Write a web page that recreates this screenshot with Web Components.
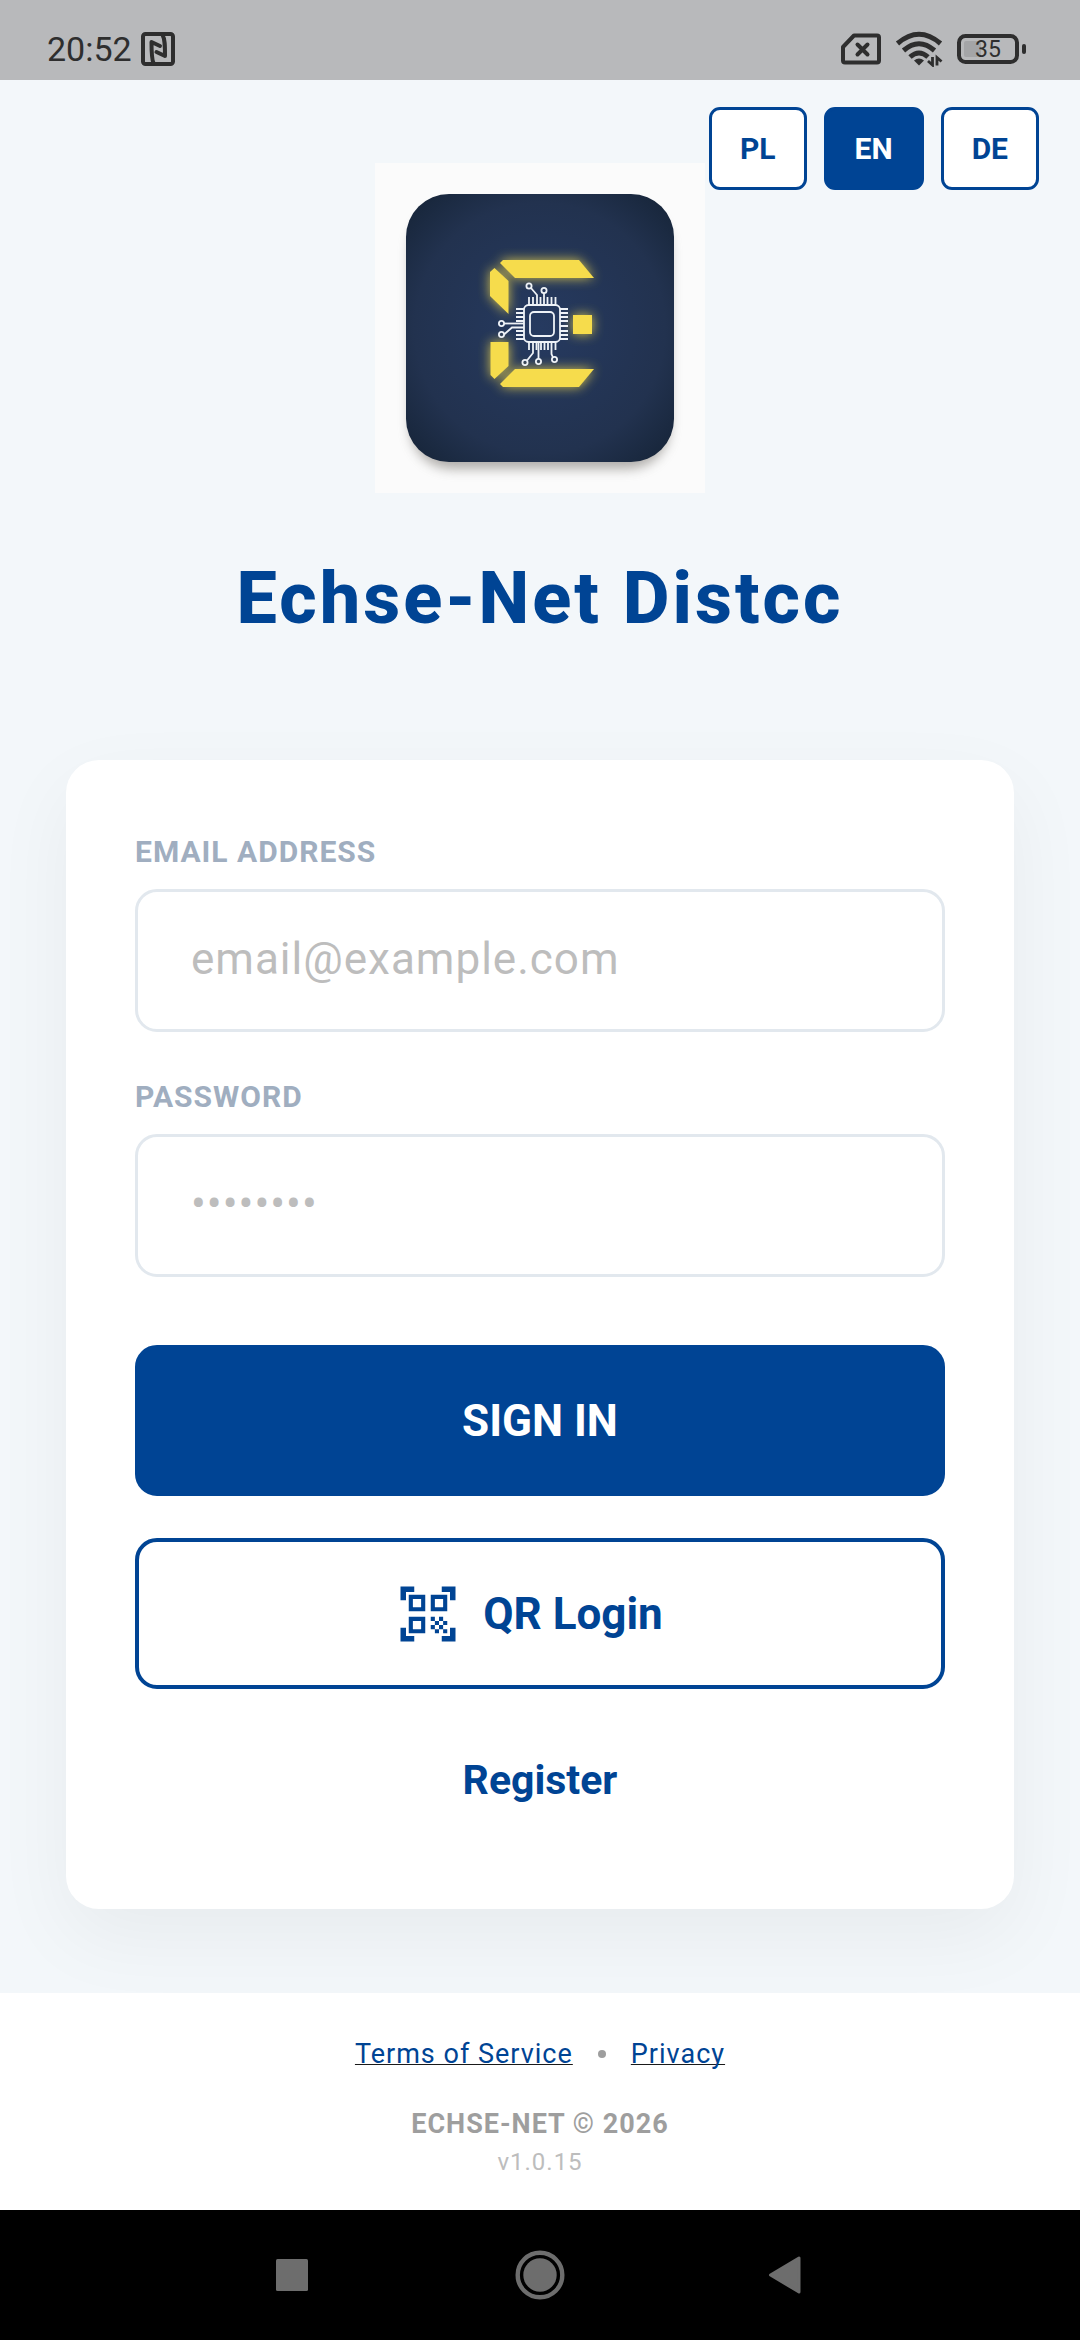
<!DOCTYPE html>
<html lang="en">
<head>
<meta charset="utf-8">
<meta name="viewport" content="width=device-width, initial-scale=1">
<title>Echse-Net Distcc</title>
<style>
  html, body { margin: 0; }
  body { font-family: Roboto, sans-serif; background: #f3f7fa; --brand: #004494; }
</style>
</head>
<body>
<login-screen></login-screen>
<script>
const define = (name, html, setup) => customElements.define(name, class extends HTMLElement {
  connectedCallback() {
    if (this.shadowRoot) return;
    const t = document.createElement('template');
    t.innerHTML = '<style>*{box-sizing:border-box}</style>' + html;
    this.attachShadow({ mode: 'open' }).append(t.content.cloneNode(true));
    if (setup) setup(this, this.shadowRoot);
  }
});

define('status-bar', `
<style>
  :host { display: flex; align-items: center; justify-content: space-between; height: 80px; padding: 18px 54px 0 47px; background: #b8b9bb; color: #2e2e2e; }
  div { display: flex; align-items: center; }
  .left { gap: 9px; }
  .right { gap: 14px; }
  time { font-size: 34px; line-height: 40px; }
  svg { display: block; }
</style>
<div class="left">
  <time>20:52</time>
  <svg width="34" height="34" viewBox="0 0 34 34" fill="none" stroke="#2e2e2e">
    <rect x="2" y="2" width="30" height="30" rx="2.5" stroke-width="4"/>
    <path d="M12.5 31C10.500 27 10.500 21 10.500 10L19 14" stroke-width="4" stroke-linejoin="round" stroke-linecap="round"/>
    <path d="M21.500 3C24 7 24 13 24 24L15.500 20" stroke-width="4" stroke-linejoin="round" stroke-linecap="round"/>
  </svg>
</div>
<div class="right">
  <svg width="40" height="32" viewBox="0 0 40 32" fill="none" stroke="#2e2e2e">
    <path d="M13 2.500H36Q38 2.500 38 4.500V27.500Q38 29.500 36 29.500H4Q2 29.500 2 27.500V14Z" stroke-width="4" stroke-linejoin="round"/>
    <path d="M16.500 11.500L26.500 21.500M26.500 11.500L16.500 21.500" stroke-width="4" stroke-linecap="round"/>
  </svg>
  <svg width="48" height="36" viewBox="0 0 48 36" fill="none" stroke="#2e2e2e" stroke-width="5">
    <path d="M2.500 12.500Q24 -6 45.500 12.500"/>
    <path d="M8.500 19.500Q24 6 39.500 19.500"/>
    <path d="M15 26Q24 18 33 26"/>
    <path d="M24 34.500L19 29.500Q24 25.500 29 29.500Z" fill="#2e2e2e" stroke="none"/>
    <path d="M37.500 26V34L33 30M42 34.500V26.500L46.500 30.500" stroke-width="2.800"/>
  </svg>
  <svg width="69" height="32" viewBox="0 0 69 32">
    <rect x="2" y="3" width="58" height="26" rx="6.500" fill="none" stroke="#2e2e2e" stroke-width="4"/>
    <rect x="7" y="8" width="17" height="16" rx="2" fill="#a4a5a7"/>
    <rect x="65" y="11" width="4" height="10" rx="2" fill="#2e2e2e"/>
    <text x="31" y="24" text-anchor="middle" font-family="Roboto" font-size="23" fill="#2e2e2e">35</text>
  </svg>
</div>`);

define('language-switch', `
<style>
  :host { display: flex; gap: 17px; }
  button { height: 83px; padding: 0 28px; border: 3px solid var(--brand); border-radius: 11px; background: #fff; color: var(--brand); font: 700 30px/36px Roboto, sans-serif; }
  button[aria-pressed=true] { background: var(--brand); color: #fff; }
</style>
<button type="button" aria-pressed="false">PL</button>
<button type="button" aria-pressed="true">EN</button>
<button type="button" aria-pressed="false">DE</button>`);

define('app-logo', `
<style>:host { display: block; width: 330px; } svg { display: block; width: 100%; }</style>
<svg viewBox="0 0 330 330" role="img" aria-label="Echse-Net">
  <defs>
    <radialGradient id="bg" cx=".5" cy=".5" r=".72"><stop offset="0" stop-color="#263a60"/><stop offset=".65" stop-color="#22324f"/><stop offset="1" stop-color="#142234"/></radialGradient>
    <filter id="glow" x="-30%" y="-30%" width="160%" height="160%"><feGaussianBlur stdDeviation="6"/></filter>
    <filter id="drop" x="-10%" y="-10%" width="120%" height="125%"><feGaussianBlur stdDeviation="6"/></filter>
    <g id="e">
      <path d="M128 97H204L219 115H140L125 100Z"/>
      <path d="M119.500 105L133.500 118V151L115 133V109Z"/>
      <path d="M198 152H217V171H198Z"/>
      <path d="M115.500 179H133.500V203L119.500 216L115.500 212Z"/>
      <path d="M140 206H219L204 224H128L125 221Z"/>
    </g>
  </defs>
  <rect width="330" height="330" fill="#fbfbfb"/>
  <rect x="35" y="44" width="260" height="262" rx="42" fill="#7d7975" opacity=".6" filter="url(#drop)"/>
  <rect x="31" y="31" width="268" height="268" rx="43" fill="url(#bg)"/>
  <use href="#e" fill="#f6dc4c" opacity=".85" filter="url(#glow)"/>
  <use href="#e" fill="#f6dc4c"/>
  <g fill="none" stroke="#eef2f7" stroke-width="1.800">
    <rect x="149" y="142" width="36" height="37" rx="4.500"/>
    <rect x="155" y="149" width="24" height="24" rx="4"/>
    <path d="M141 146H149M141 150H149M141 154H149M141 158H149M141 168H149M141 172H149M141 176H149"/>
    <path d="M185 146H193M185 150H193M185 154H193M185 158H193M185 163H193M185 168H193M185 172H193M185 176H193"/>
    <path d="M154 134V142M158 134V142M165.500 134V142M172.500 134V142M176.500 134V142M180.500 134V142"/>
    <path d="M154 179V187M161.500 179V187M166 179V187M169.500 179V187M173 179V187M180.500 179V187"/>
    <circle cx="154" cy="123" r="2.600"/><path d="M156 125L162 132V142"/>
    <circle cx="169" cy="127.500" r="2.600"/><path d="M169 130V142"/>
    <circle cx="126.500" cy="160.500" r="2.600"/><path d="M129 160.500H149"/>
    <circle cx="126.500" cy="171.500" r="2.600"/><path d="M129 171.500L137 164.500H149"/>
    <circle cx="150" cy="199.500" r="2.600"/><path d="M152 197.500L158 190V179"/>
    <circle cx="163.500" cy="198.500" r="2.600"/><path d="M163.500 196V179"/>
    <circle cx="179.500" cy="196.500" r="2.600"/><path d="M178 194.500L176.500 191V179"/>
  </g>
</svg>`);

define('text-field', `
<style>
  :host { display: flex; flex-direction: column; gap: 19px; }
  label { color: #a0aec0; font-size: 30px; font-weight: 700; line-height: 36px; letter-spacing: 1px; }
  input { width: 100%; height: 143px; padding: 0 53px 4px; border: 3px solid #e2e8ee; border-radius: 22px; outline: 0; background: #fff; color: #1a202c; font: 400 44px/52px Roboto, sans-serif; letter-spacing: 1px; }
  input::placeholder { color: #bdbdbd; opacity: 1; }
</style>
<label for="field"></label><input id="field">`, (host, root) => {
  root.querySelector('label').textContent = host.getAttribute('label');
  const input = root.querySelector('input');
  input.type = host.getAttribute('type');
  input.placeholder = host.getAttribute('placeholder');
});

define('action-button', `
<style>
  :host { display: flex; justify-content: center; }
  button { display: flex; align-items: center; justify-content: center; gap: 22px; width: 100%; height: 151px; border: 4px solid var(--brand); border-radius: 22px; background: var(--brand); color: #fff; font: 700 44px/52px Roboto, sans-serif; }
  :host([kind=outline]) button { background: #fff; color: var(--brand); padding-right: 28px; }
  :host([kind=text]) button { width: auto; height: 110px; border: 0; background: none; color: var(--brand); font-size: 41px; }
</style>
<button type="button"><slot name="icon"></slot><slot></slot></button>`);

define('qr-icon', `
<style>:host { display: block; width: 66px; height: 66px; } svg { display: block; }</style>
<svg width="66" height="66" viewBox="0 0 24 24" fill="currentColor" aria-hidden="true"><path d="M9.500,6.500v3h-3v-3H9.500 M11,5H5v6h6V5z M9.500,14.500v3h-3v-3H9.500 M11,13H5v6h6V13z M17.500,6.500v3h-3v-3H17.500 M19,5h-6v6h6V5z M13,13h1.500v1.500H13V13z M14.500,14.500H16V16h-1.500V14.500z M16,13h1.500v1.500H16V13z M13,16h1.500v1.500H13V16z M14.500,17.500H16V19h-1.500V17.500z M16,16h1.500v1.500H16V16z M17.500,14.500H19V16h-1.500V14.500z M17.500,17.500H19V19h-1.500V17.500z M22,7h-2V4h-3V2h5V7z M22,22v-5h-2v3h-3v2H22z M2,22h5v-2H4v-3H2V22z M2,2v5h2V4h3V2H2z" fill-rule="evenodd"/></svg>`);

define('login-card', `
<style>
  :host { display: block; }
  form { display: flex; flex-direction: column; padding: 74px 69px; border-radius: 33px; background: #fff; box-shadow: 0 28px 80px rgba(0,0,0,.05); }
  .fields { display: flex; flex-direction: column; gap: 47px; margin-bottom: 68px; }
  .actions { display: flex; flex-direction: column; gap: 42px; margin-bottom: 36px; }
</style>
<form>
  <div class="fields">
    <text-field label="EMAIL ADDRESS" type="email" placeholder="email@example.com"></text-field>
    <text-field label="PASSWORD" type="password" placeholder="••••••••"></text-field>
  </div>
  <div class="actions">
    <action-button>SIGN IN</action-button>
    <action-button kind="outline"><qr-icon slot="icon"></qr-icon>QR Login</action-button>
  </div>
  <action-button kind="text">Register</action-button>
</form>`);

define('page-footer', `
<style>
  :host { display: flex; flex-direction: column; align-items: center; height: 217px; padding-top: 44px; background: #fff; }
  nav { display: flex; align-items: center; gap: 25px; font-size: 27px; line-height: 34px; letter-spacing: 1px; margin-bottom: 36px; }
  a { color: var(--brand); text-decoration: underline 1px #1a1a1a; text-underline-offset: 1px; text-decoration-skip-ink: none; }
  i { width: 8px; height: 8px; border-radius: 50%; background: #9e9e9e; }
  b { color: #9e9e9e; font-size: 27px; line-height: 34px; letter-spacing: 1px; }
  small { color: #bdbdbd; font-size: 24px; line-height: 42px; letter-spacing: 1px; }
</style>
<nav><a href="#terms">Terms of Service</a><i></i><a href="#privacy">Privacy</a></nav>
<b>ECHSE-NET © 2026</b>
<small>v1.0.15</small>`);

define('system-nav', `
<style>
  :host { display: flex; align-items: center; justify-content: center; gap: 199px; height: 130px; background: #000; }
  button { display: block; padding: 0; border: 0; background: none; }
  svg { display: block; }
</style>
<button type="button" aria-label="Recent apps"><svg width="50" height="50" viewBox="0 0 50 50"><rect x="10" y="9" width="32" height="32" rx="1.500" fill="#6d6d6d"/></svg></button>
<button type="button" aria-label="Home"><svg width="50" height="50" viewBox="0 0 50 50"><circle cx="25" cy="25" r="22.300" fill="none" stroke="#6d6d6d" stroke-width="4.400"/><circle cx="25" cy="25" r="16.700" fill="#6d6d6d"/></svg></button>
<button type="button" aria-label="Back"><svg width="50" height="50" viewBox="0 0 50 50"><path d="M6.500 25L35 8V42Z" fill="#6d6d6d" stroke="#6d6d6d" stroke-width="3" stroke-linejoin="round"/></svg></button>`);

define('login-screen', `
<style>
  :host { display: flex; flex-direction: column; min-height: 100vh; }
  main { position: relative; overflow: hidden; flex: 1; display: flex; flex-direction: column; padding: 83px 66px 0; }
  language-switch { position: absolute; top: 27px; right: 41px; }
  header { display: flex; flex-direction: column; align-items: center; gap: 62px; margin-bottom: 118px; }
  h1 { margin: 0; color: var(--brand); font-size: 72px; font-weight: 800; line-height: 87px; letter-spacing: 3px; }
</style>
<status-bar></status-bar>
<main>
  <header><app-logo></app-logo><h1>Echse-Net Distcc</h1></header>
  <login-card></login-card>
  <language-switch></language-switch>
</main>
<page-footer></page-footer>
<system-nav></system-nav>`);
</script>
</body>
</html>
